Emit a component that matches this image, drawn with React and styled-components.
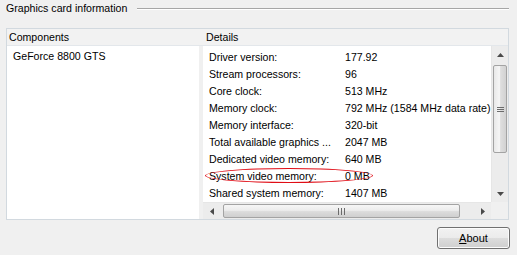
import React from 'react'
import styled, { createGlobalStyle } from 'styled-components'

const Global = createGlobalStyle`
  body {
    margin: 0;
    background: #f0f0f0;
    font-family: "Liberation Sans", Arial, sans-serif;
    font-size: 10.6px;
    color: #000;
  }
`

const details = [
  ['Driver version:', '177.92'],
  ['Stream processors:', '96'],
  ['Core clock:', '513 MHz'],
  ['Memory clock:', '792 MHz (1584 MHz data rate)'],
  ['Memory interface:', '320-bit'],
  ['Total available graphics ...', '2047 MB'],
  ['Dedicated video memory:', '640 MB'],
  ['System video memory:', '0 MB', true],
  ['Shared system memory:', '1407 MB'],
]

const Arrow = ({ dir }) => {
  const pts = {
    up: '0,4 3.5,0 7,4',
    down: '0,0 7,0 3.5,4',
    left: '4,0 4,7 0,3.5',
    right: '0,0 4,3.5 0,7',
  }[dir]
  const vertical = dir === 'up' || dir === 'down'
  return (
    <svg width={vertical ? 7 : 4} height={vertical ? 4 : 7}>
      <polygon points={pts} fill="#4a4a4a" />
    </svg>
  )
}

export default function App() {
  return (
    <Page>
      <Global />
      <Legend>
        <span>Graphics card information</span>
        <Rule />
      </Legend>
      <Box>
        <Header>
          <HeadCell width={196} pad={2}>Components</HeadCell>
          <HeadCell pad={3}>Details</HeadCell>
        </Header>
        <Body>
          <LeftPane>GeForce 8800 GTS</LeftPane>
          <Splitter />
          <RightPane>
            <List>
              {details.map(([label, value, mark]) => (
                <Row key={label} mark={mark}>
                  <Label>{label}</Label>
                  <Value>{value}</Value>
                </Row>
              ))}
            </List>
            <VScroll>
              <ScrollBtn><Arrow dir="up" /></ScrollBtn>
              <VTrack>
                <VThumb>
                  <svg width="7" height="5">
                    <path d="M0 0.5H7M0 2.5H7M0 4.5H7" stroke="#6b6b6b" strokeWidth="1" />
                  </svg>
                </VThumb>
              </VTrack>
              <ScrollBtn><Arrow dir="down" /></ScrollBtn>
            </VScroll>
            <HScroll>
              <ScrollBtn><Arrow dir="left" /></ScrollBtn>
              <HTrack>
                <HThumb>
                  <svg width="7" height="7">
                    <path d="M0.5 0V7M3.5 0V7M6.5 0V7" stroke="#6b6b6b" strokeWidth="1" />
                  </svg>
                </HThumb>
              </HTrack>
              <ScrollBtn><Arrow dir="right" /></ScrollBtn>
            </HScroll>
            <Corner />
          </RightPane>
        </Body>
      </Box>
      <Footer>
        <Button><u>A</u>bout</Button>
      </Footer>
    </Page>
  )
}

const Page = styled.div`
  width: 517px;
  height: 255px;
  box-sizing: border-box;
  padding: 1px 8px 0 6px;
  display: flex;
  flex-direction: column;
`

const Legend = styled.div`
  display: flex;
  align-items: center;
  gap: 10px;
  height: 14px;
  white-space: nowrap;
`

const Rule = styled.div`
  flex: 1;
  height: 0;
  border-top: 1px solid #a6a6a6;
  border-bottom: 1px solid #fff;
  margin-top: 1px;
`

const Box = styled.div`
  margin-top: 13px;
  height: 192px;
  box-sizing: border-box;
  border: 1px solid #d2d9df;
  display: flex;
  flex-direction: column;
`

const Header = styled.div`
  height: 16px;
  display: flex;
  align-items: center;
  border-bottom: 1px solid #e3e7eb;
  background: #f2f2f2;
`

const HeadCell = styled.div`
  width: ${p => (p.width ? p.width + 'px' : 'auto')};
  flex: ${p => (p.width ? 'none' : 1)};
  padding-left: ${p => p.pad}px;
  box-sizing: border-box;
`

const Body = styled.div`
  flex: 1;
  display: flex;
  min-height: 0;
`

const LeftPane = styled.div`
  width: 192px;
  background: #fff;
  padding: 4px 0 0 6px;
  box-sizing: border-box;
`

const Splitter = styled.div`
  width: 4px;
  background: #f0f0f0;
`

const RightPane = styled.div`
  flex: 1;
  display: grid;
  grid-template-columns: 1fr 17px;
  grid-template-rows: 1fr 17px;
  background: #fff;
`

const List = styled.div`
  padding: 2px 0 0 6px;
  overflow: hidden;
`

const Row = styled.div`
  position: relative;
  height: 17px;
  display: flex;
  align-items: center;
  white-space: nowrap;

  &::after {
    content: '';
    display: ${p => (p.mark ? 'block' : 'none')};
    position: absolute;
    left: -4px;
    top: 1px;
    width: 168px;
    height: 15px;
    box-sizing: border-box;
    border: 1.3px solid #e00d16;
    border-radius: 84px / 7.5px;
    pointer-events: none;
  }
`

const Label = styled.span`
  width: 136px;
  flex: none;
`

const Value = styled.span``

const ScrollBtn = styled.div`
  width: 17px;
  height: 17px;
  flex: none;
  display: flex;
  align-items: center;
  justify-content: center;
`

const VScroll = styled.div`
  display: flex;
  flex-direction: column;
  background: #ececec;
  border-left: 1px solid #e6e6e6;
`

const VTrack = styled.div`
  flex: 1;
  padding: 2px 1px;
`

const VThumb = styled.div`
  height: 88px;
  box-sizing: border-box;
  border: 1px solid #a3a3a3;
  border-radius: 2px;
  background: linear-gradient(90deg, #e8e8e8, #f6f6f6 45%, #dedede 55%, #d2d2d2);
  display: flex;
  align-items: center;
  justify-content: center;
`

const HScroll = styled.div`
  display: flex;
  background: #ececec;
  border-top: 1px solid #e6e6e6;
`

const HTrack = styled.div`
  flex: 1;
  padding: 1px 14px 1px 3px;
`

const HThumb = styled.div`
  height: 100%;
  box-sizing: border-box;
  border: 1px solid #a3a3a3;
  border-radius: 2px;
  background: linear-gradient(180deg, #f6f6f6, #ececec 45%, #dcdcdc 55%, #cfcfcf);
  display: flex;
  align-items: center;
  justify-content: center;
`

const Corner = styled.div`
  background: #f0f0f0;
`

const Footer = styled.div`
  display: flex;
  justify-content: flex-end;
  margin-top: 7px;
`

const Button = styled.button`
  width: 73px;
  height: 22px;
  margin-right: -1px;
  border: 1px solid #707070;
  border-radius: 3px;
  background: linear-gradient(180deg, #f2f2f2, #ebebeb 50%, #dddddd 50%, #cfcfcf);
  box-shadow: inset 0 0 0 1px #fcfcfc;
  font-family: "Liberation Sans", Arial, sans-serif;
  font-size: 11px;
  color: #000;
  padding: 0;
`
